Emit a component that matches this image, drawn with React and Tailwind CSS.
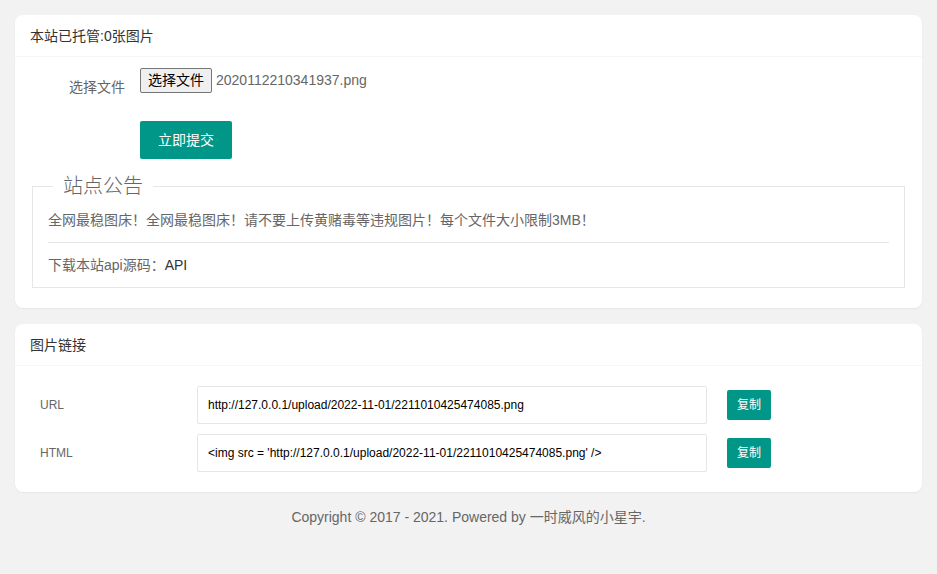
const font = { fontFamily: '"Liberation Sans", "Noto Sans CJK SC", Arial, sans-serif' }

function CardHeader({ children }) {
  return (
    <div className="h-[42px] px-[15px] leading-[42px] text-[14px] text-[#333] border-b border-[#f6f6f6]">
      {children}
    </div>
  )
}

function LinkRow({ label, value }) {
  return (
    <div className="flex items-center">
      <div className="w-[167px] pl-[10px] text-[12px] text-[#666]">{label}</div>
      <div className="w-[510px] h-[38px] border border-[#e6e6e6] rounded-[2px] pl-[10px] flex items-center text-[12px] text-black whitespace-nowrap overflow-hidden">
        {value}
      </div>
      <button className="ml-[20px] w-[44px] h-[30px] rounded-[2px] bg-[#009688] text-white text-[12px]">
        复制
      </button>
    </div>
  )
}

export default function App() {
  return (
    <div className="min-h-[574px] bg-[#f2f2f2] pt-[15px] text-[14px] text-[#666]" style={font}>
      <div className="mx-[15px] bg-white rounded-[8px] shadow-[0_1px_2px_0_rgba(0,0,0,0.05)]">
        <CardHeader>本站已托管:0张图片</CardHeader>
        <div className="px-[15px] pt-[11px] pb-[10px]">
          <div className="flex mb-[15px] h-[38px]">
            <label className="w-[110px] px-[15px] py-[9px] leading-[20px] text-right text-[#666]">选择文件</label>
            <div className="flex items-start">
              <span className="h-[25px] px-[7px] flex items-center text-[14px] text-black bg-[#efefef] border border-[#767676] rounded-[2px]">
                选择文件
              </span>
              <span className="ml-[4px] leading-[24px] text-[#666]">2020112210341937.png</span>
            </div>
          </div>
          <div className="flex mb-[14px]">
            <div className="w-[110px]" />
            <button className="h-[38px] px-[18px] bg-[#009688] text-white text-[14px] rounded-[2px]">立即提交</button>
          </div>
          <fieldset className="mx-[2px] mb-[10px] border border-[#e6e6e6]">
            <legend className="ml-[20px] px-[10px] text-[20px] font-light leading-[26px] text-[#666]">站点公告</legend>
            <div className="px-[15px] pt-[11px] pb-[12px] leading-[20px]">
              <p>全网最稳图床！全网最稳图床！请不要上传黄赌毒等违规图片！每个文件大小限制3MB！</p>
              <hr className="my-[12px] border-0 border-t border-[#e6e6e6]" />
              <p>下载本站api源码：<span className="text-[#333]">API</span></p>
            </div>
          </fieldset>
        </div>
      </div>

      <div className="mx-[15px] mt-[16px] bg-white rounded-[8px] shadow-[0_1px_2px_0_rgba(0,0,0,0.05)]">
        <CardHeader>图片链接</CardHeader>
        <div className="px-[15px] py-[20px] flex flex-col gap-[10px]">
          <LinkRow label="URL" value="http://127.0.0.1/upload/2022-11-01/2211010425474085.png" />
          <LinkRow label="HTML" value="<img src = 'http://127.0.0.1/upload/2022-11-01/2211010425474085.png' />" />
        </div>
      </div>

      <div className="mt-[15px] text-center leading-[20px] text-[#666]">
        Copyright © 2017 - 2021. Powered by 一时威风的小星宇.
      </div>
    </div>
  )
}
